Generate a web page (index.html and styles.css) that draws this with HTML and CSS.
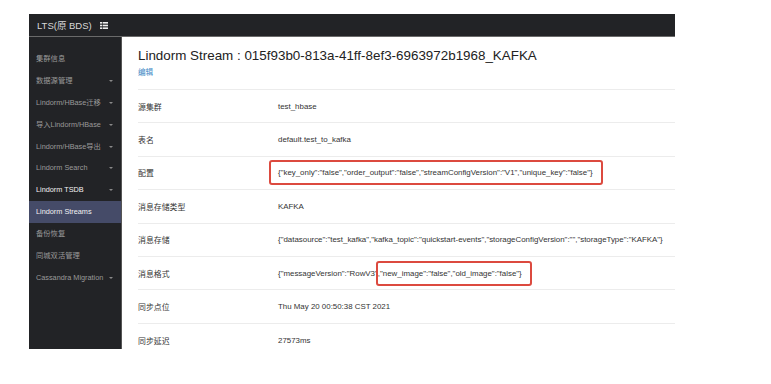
FILE: index.html
```html
<!DOCTYPE html>
<html lang="zh-CN">
<head>
  <meta charset="UTF-8" />
  <title>Lindorm Stream</title>
  <link rel="stylesheet" href="styles.css">
</head>
<body>
  <div class="frame">
    <div class="topbar">
      <span class="brand">LTS(原 BDS)</span>
      <svg class="brand-icon" width="8" height="7" viewBox="0 0 8 7">
        <rect x="0" y="0" width="2" height="1.6" fill="#eee"/>
        <rect x="2.6" y="0" width="5.4" height="1.6" fill="#eee"/>
        <rect x="0" y="2.7" width="2" height="1.6" fill="#eee"/>
        <rect x="2.6" y="2.7" width="5.4" height="1.6" fill="#eee"/>
        <rect x="0" y="5.4" width="2" height="1.6" fill="#eee"/>
        <rect x="2.6" y="5.4" width="5.4" height="1.6" fill="#eee"/>
      </svg>
    </div>

    <div class="layout">
      <ul class="sidebar">
        <li>集群信息</li>
        <li>数据源管理 <span class="caret"></span></li>
        <li>Lindorm/HBase迁移 <span class="caret"></span></li>
        <li>导入Lindorm/HBase <span class="caret"></span></li>
        <li>Lindorm/HBase导出 <span class="caret"></span></li>
        <li>Lindorm Search <span class="caret"></span></li>
        <li class="bright">Lindorm TSDB <span class="caret"></span></li>
        <li class="active">Lindorm Streams</li>
        <li>备份恢复</li>
        <li>同城双活管理</li>
        <li>Cassandra Migration<span class="caret tight"></span></li>
      </ul>

      <div class="main">
        <h1>Lindorm Stream : 015f93b0-813a-41ff-8ef3-6963972b1968_KAFKA</h1>
        <a class="edit" href="#">编辑</a>

        <table class="detail">
          <tr>
            <td class="label">源集群</td>
            <td>test_hbase</td>
          </tr>
          <tr>
            <td class="label">表名</td>
            <td>default.test_to_kafka</td>
          </tr>
          <tr>
            <td class="label">配置</td>
            <td><span class="mark mark-config">{"key_only":"false","order_output":"false","streamConfigVersion":"V1","unique_key":"false"}</span></td>
          </tr>
          <tr>
            <td class="label">消息存储类型</td>
            <td>KAFKA</td>
          </tr>
          <tr>
            <td class="label">消息存储</td>
            <td>{"datasource":"test_kafka","kafka_topic":"quickstart-events","storageConfigVersion":"","storageType":"KAFKA"}</td>
          </tr>
          <tr>
            <td class="label">消息格式</td>
            <td>{"messageVersion":"RowV3"<span class="mark mark-format">,"new_image":"false","old_image":"false"}</span></td>
          </tr>
          <tr>
            <td class="label">同步点位</td>
            <td>Thu May 20 00:50:38 CST 2021</td>
          </tr>
          <tr>
            <td class="label">同步延迟</td>
            <td>27573ms</td>
          </tr>
        </table>
      </div>
    </div>
  </div>
</body>
</html>
```

FILE: styles.css
```css
body {
  margin: 0;
  padding: 0;
  background: #fff;
  font-family: "Liberation Sans", Arial, "Noto Sans CJK SC", sans-serif;
  color: #333;
}

.frame {
  margin: 14px 0 0 29px;
  width: 646px;
}

.topbar {
  height: 22px;
  background: #222326;
  border-bottom: 1px solid #6a6a6a;
  display: flex;
  align-items: center;
  padding-left: 8px;
}

.brand {
  color: #d8d8d8;
  font-size: 9.5px;
}

.brand-icon {
  margin-left: 8px;
}

.layout {
  display: flex;
  height: 312px;
}

.sidebar {
  list-style: none;
  margin: 0;
  padding: 11px 0 0;
  width: 92px;
  background: #222326;
  border-right: 1px solid #555;
}

.sidebar li {
  height: 21.9px;
  line-height: 21.9px;
  padding-left: 7px;
  padding-right: 8px;
  font-size: 7.3px;
  color: #9a9a9a;
  display: flex;
  align-items: center;
  justify-content: space-between;
  white-space: nowrap;
}

.sidebar li.bright {
  color: #f2f2f2;
}

.sidebar li.active {
  background: #454b68;
  color: #f2f2f2;
}

.caret {
  width: 0;
  height: 0;
  border-left: 2px solid transparent;
  border-right: 2px solid transparent;
  border-top: 2px solid #8a8a8a;
}

.caret.tight {
  margin-left: 2px;
}

.main {
  flex: 1;
  padding-left: 16px;
}

h1 {
  margin: 10px 0 0;
  font-size: 13.4px;
  line-height: 18px;
  font-weight: normal;
  color: #222;
}

.edit {
  display: block;
  margin-top: 2px;
  font-size: 7.6px;
  line-height: 12px;
  color: #3a86c4;
  text-decoration: none;
}

.detail {
  margin-top: 10px;
  width: 100%;
  border-collapse: collapse;
  font-size: 7.9px;
  color: #333;
}

.detail tr {
  height: 33.4px;
  border-top: 1px solid #ececec;
}

.detail td {
  padding: 0;
  white-space: nowrap;
}

.detail td.label {
  width: 140px;
}

.mark {
  position: relative;
}

.mark::after {
  content: "";
  position: absolute;
  top: -8px;
  bottom: -8px;
  border: 2px solid #dc4a3f;
  border-radius: 3px;
}

.mark-config::after {
  left: -9px;
  right: -10px;
}

.mark-format::after {
  left: -2px;
  right: -10px;
}
```
